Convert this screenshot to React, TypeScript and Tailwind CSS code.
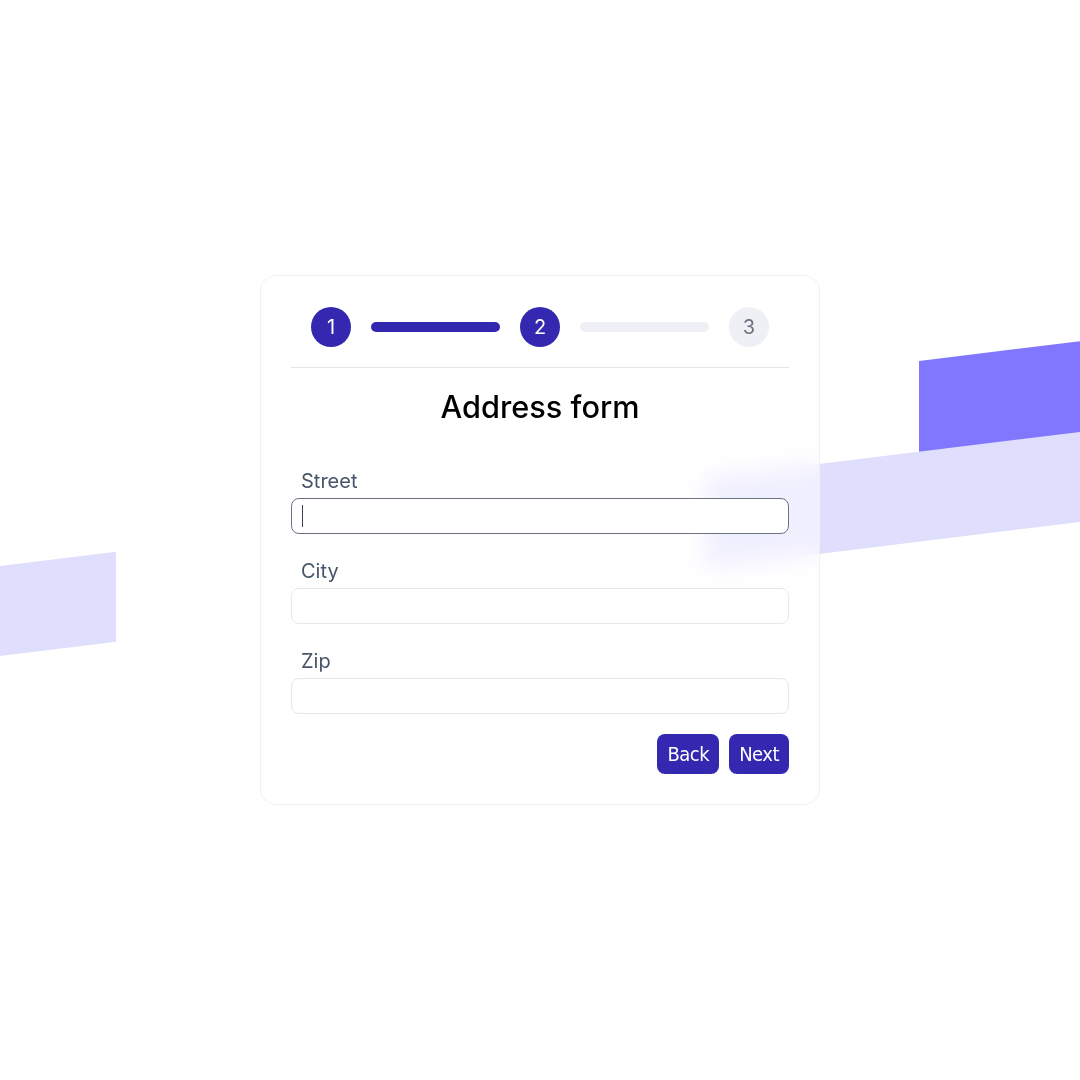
const steps = [
  { n: 1, done: true },
  { n: 2, done: true },
  { n: 3, done: false },
];

const fields = ["Street", "City", "Zip"];

const StepDot = ({ n, done }: { n: number; done: boolean }) => (
  <div
    className={
      done
        ? "flex h-10 w-10 shrink-0 items-center justify-center rounded-full bg-[#3428b0] text-[20px] text-white"
        : "flex h-10 w-10 shrink-0 items-center justify-center rounded-full bg-[#eef0f6] text-[20px] text-[#6b7280]"
    }
  >
    {n}
  </div>
);

const App = () => {
  return (
    <div className="relative flex h-[1080px] w-full items-center justify-center overflow-hidden bg-white font-['Inter',sans-serif]">
      {/* background stripes */}
      <div className="absolute left-[919px] top-[361px] h-[110px] w-[220px] origin-top-left -skew-y-7 bg-[#8177fe]" />
      <div className="absolute left-[705px] top-[478px] h-[90px] w-[420px] origin-top-left -skew-y-7 bg-[#e0defd]" />
      <div className="absolute left-0 top-[566px] h-[90px] w-[116px] origin-top-left -skew-y-7 bg-[#e0defd]" />

      <div className="relative w-[560px] rounded-2xl border border-[#eef0f3] bg-white/50 px-[30px] pb-[30px] pt-[31px] backdrop-blur-md">
        <div className="flex items-center gap-5 px-5">
          {steps.map((s, i) => (
            <div key={s.n} className={i < steps.length - 1 ? "flex flex-1 items-center gap-5" : "flex items-center"}>
              <StepDot n={s.n} done={s.done} />
              {i < steps.length - 1 && (
                <div
                  className={
                    steps[i + 1].done
                      ? "h-2.5 flex-1 rounded-full bg-[#3428b0]"
                      : "h-2.5 flex-1 rounded-full bg-[#eef0f6]"
                  }
                />
              )}
            </div>
          ))}
        </div>

        <div className="mt-5 h-px bg-[#e3e5e8]" />

        <h1 className="mt-[21px] text-center text-[30.7px] font-medium leading-9 text-black">Address form</h1>

        <div className="mt-[42px] flex flex-col gap-[23px]">
          {fields.map((f, i) => (
            <div key={f} className="flex flex-col">
              <label className="pl-2.5 text-[20px] leading-7 text-[#475569]">{f}</label>
              <div className="relative mt-[3px]">
                <input
                  className={
                    i === 0
                      ? "h-9 w-full rounded-lg border border-[#6b7280] bg-white px-2.5 outline-none"
                      : "h-9 w-full rounded-lg border border-[#e5e7eb] bg-white px-2.5 outline-none"
                  }
                />
                {i === 0 && <span className="absolute left-[11px] top-[7px] h-[22px] w-px bg-[#374151]" />}
              </div>
            </div>
          ))}
        </div>

        <div className="mt-5 flex justify-end gap-2.5">
          <button className="h-10 rounded-lg bg-[#3428b0] px-2.5 font-['DejaVu_Sans_Condensed','DejaVu_Sans',sans-serif] text-[20px] tracking-[-0.5px] text-white">
            Back
          </button>
          <button className="h-10 rounded-lg bg-[#3428b0] px-2.5 font-['DejaVu_Sans_Condensed','DejaVu_Sans',sans-serif] text-[20px] tracking-[-0.5px] text-white">
            Next
          </button>
        </div>
      </div>
    </div>
  );
};

export default App;
